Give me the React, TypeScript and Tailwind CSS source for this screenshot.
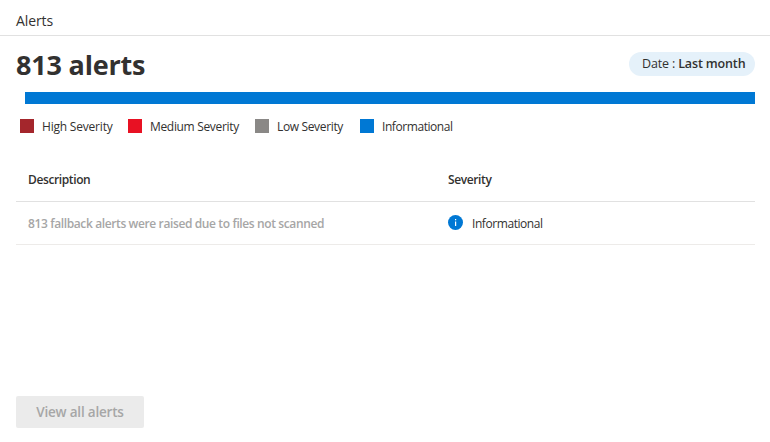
const legend = [
  { label: 'High Severity', color: 'bg-[#a4262c]', width: 'w-[108px]', tracking: 'tracking-[-0.2px]' },
  { label: 'Medium Severity', color: 'bg-[#e81123]', width: 'w-[127px]', tracking: 'tracking-[-0.33px]' },
  { label: 'Low Severity', color: 'bg-[#8a8886]', width: 'w-[105px]', tracking: 'tracking-[-0.35px]' },
  { label: 'Informational', color: 'bg-[#0078d4]', width: 'w-[110px]', tracking: 'tracking-[-0.43px]' },
];

export default function App() {
  return (
    <div className="flex h-[442px] w-[770px] flex-col bg-white font-['Open_Sans',sans-serif] text-[#323130]">
      <div className="h-[36px] border-b border-[#e1e1e1] pl-4 pt-[12px] text-[14px] leading-[18px] tracking-[-0.1px]">Alerts</div>

      <div className="mt-[11px] flex h-[36px] items-center justify-between pl-4 pr-[15px]">
        <h1 className="text-[27px] leading-[36px] font-bold tracking-[-0.2px]">813 alerts</h1>
        <div className="mt-[-2px] flex h-[24px] w-[126px] items-center justify-start pl-[13px] rounded-full bg-[#e5f1fa] text-[12.5px] tracking-[-0.15px]">
          <span>Date :&nbsp;</span>
          <span className="font-semibold">Last month</span>
        </div>
      </div>

      <div className="mt-[9px] ml-[25px] mr-[15px] h-[12px] bg-[#0078d4]" />

      <div className="mt-[15px] ml-[20px] flex h-[14px] items-center">
        {legend.map((item) => (
          <div key={item.label} className={`flex items-center gap-[8px] ${item.width}`}>
            <span className={`h-[14px] w-[14px] shrink-0 ${item.color}`} />
            <span className={`mt-[2px] text-[12px] leading-[14px] whitespace-nowrap ${item.tracking}`}>{item.label}</span>
          </div>
        ))}
      </div>

      <div className="mt-[25px] mx-[15px] ml-4">
        <div className="flex h-[44px] items-center border-b border-[#e1e1e1] text-[12px] font-semibold tracking-[-0.38px]">
          <div className="w-[432px] pl-3">Description</div>
          <div>Severity</div>
        </div>
        <div className="flex h-[43px] items-center border-b border-[#edebe9] text-[12px]">
          <div className="mt-[2px] w-[432px] pl-3 font-semibold tracking-[-0.38px] text-[#a6a6a6]">
            813 fallback alerts were raised due to files not scanned
          </div>
          <div className="flex items-center gap-[9px]">
            <svg width="15" height="15" viewBox="0 0 15 15" className="mb-[2px]">
              <circle cx="7.5" cy="7.5" r="7.5" fill="#0078d4" />
              <rect x="7" y="6.5" width="1.2" height="4.5" fill="#fff" />
              <rect x="7" y="4" width="1.2" height="1.3" fill="#fff" />
            </svg>
            <span className="mt-[2px] tracking-[-0.43px]">Informational</span>
          </div>
        </div>
      </div>

      <button
        type="button"
        className="mt-[151px] ml-4 h-[32px] w-[128px] rounded-[2px] bg-[#ebebeb] text-[13.5px] font-semibold tracking-[-0.2px] text-[#a6a6a6]"
      >
        View all alerts
      </button>
    </div>
  );
}
